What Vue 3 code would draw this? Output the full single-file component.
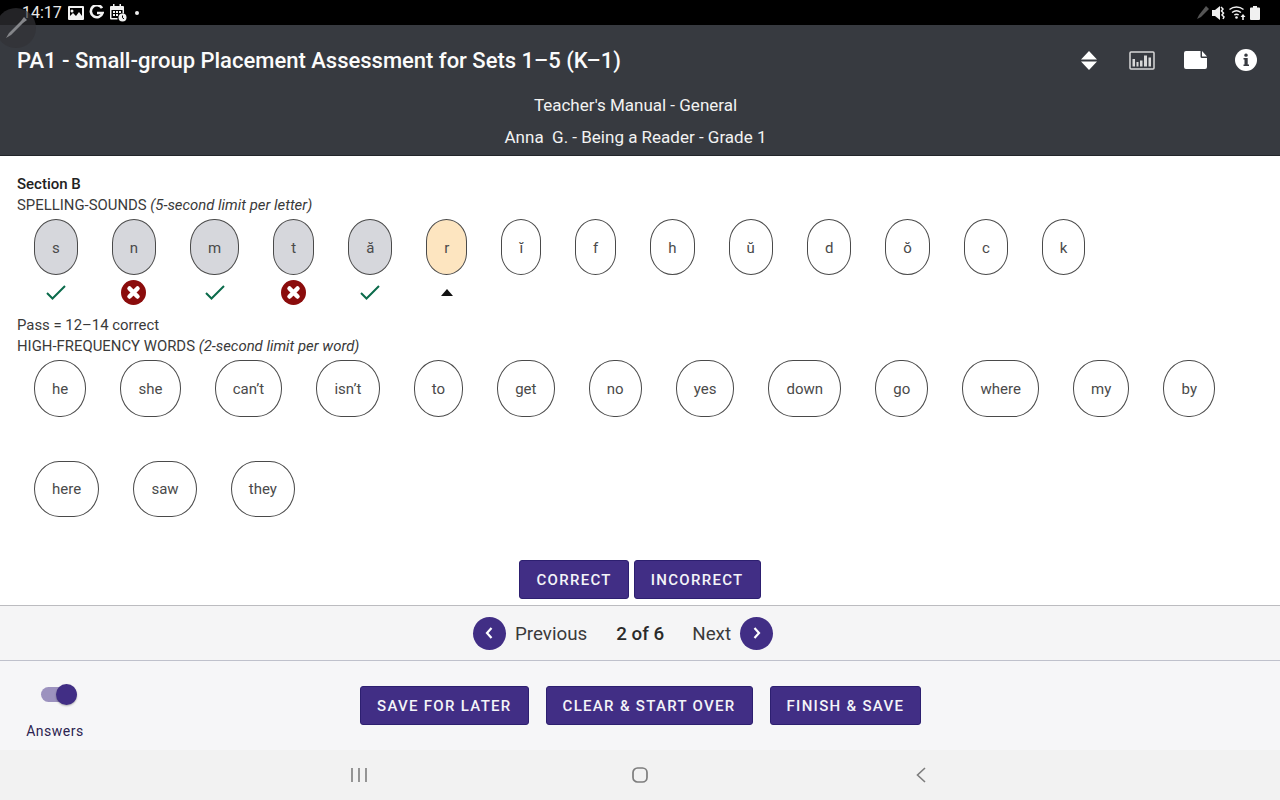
<script setup>
const letters = [
  { t: 's', state: 'done', mark: 'ok' },
  { t: 'n', state: 'done', mark: 'bad' },
  { t: 'm', state: 'done', mark: 'ok' },
  { t: 't', state: 'done', mark: 'bad' },
  { t: 'ă', state: 'done', mark: 'ok' },
  { t: 'r', state: 'current', mark: 'cur' },
  { t: 'ĭ' }, { t: 'f' }, { t: 'h' }, { t: 'ŭ' }, { t: 'd' }, { t: 'ŏ' }, { t: 'c' }, { t: 'k' }
]
const words = ['he', 'she', 'can’t', 'isn’t', 'to', 'get', 'no', 'yes', 'down', 'go', 'where', 'my', 'by', 'here', 'saw', 'they']
</script>

<template>
  <div class="page">
    <div class="status">
      <div class="status-left">
        <span class="time">14:17</span>
        <svg width="16" height="14" viewBox="0 0 16 14"><path fill="#f2f2f2" fill-rule="evenodd" d="M1 0h14a1 1 0 0 1 1 1v12a1 1 0 0 1-1 1H1a1 1 0 0 1-1-1V1a1 1 0 0 1 1-1zm1 2v8l3-3 3 3 3-4 3 4V2zm2 1.5a1.500 1.500 0 1 1 0 3 1.500 1.500 0 0 1 0-3z"/></svg>
        <svg width="15" height="15" viewBox="0 0 15 15"><path fill="none" stroke="#f2f2f2" stroke-width="2.600" d="M13 3.200A6 6 0 1 0 13.600 8H8"/></svg>
        <svg width="18" height="18" viewBox="0 0 18 18"><path fill="#f0f0f0" fill-rule="evenodd" d="M2 2h2V0h1.500v2h5V0H12v2h2a1 1 0 0 1 1 1v6.500h-1.500V6h-11v8h6v1.500H2a1 1 0 0 1-1-1V3a1 1 0 0 1 1-1z"/><path fill="#f0f0f0" d="M4 7h2v2H4zM7 7h2v2H7zM10 7h2v2h-2zM4 10h2v2H4zM7 10h2v2H7z"/><circle cx="13.500" cy="13.500" r="4" fill="#f0f0f0"/><path fill="none" stroke="#000" d="M13.500 11.500v2.300l1.500 1"/></svg>
        <span class="dot"></span>
      </div>
      <div class="status-right">
        <svg width="13" height="13" viewBox="0 0 13 13"><path fill="#555" d="M10 0l3 3-8 8-4 2 2-4z"/></svg>
        <svg width="14" height="14" viewBox="0 0 14 14"><path fill="#f0f0f0" d="M0 4h3l5-4v14l-5-4H0z"/><path fill="none" stroke="#f0f0f0" stroke-width="1.500" d="M9 1l2 2-1.500 2 2 2-1.500 2 2 2-1 2"/></svg>
        <svg width="18" height="15" viewBox="0 0 18 15"><g fill="none" stroke="#f0f0f0" stroke-width="1.400"><path d="M0.500 4.500a11 11 0 0 1 14 0"/><path d="M3 7.500a7.500 7.500 0 0 1 9 0"/><path d="M5.300 10a4 4 0 0 1 4.400 0"/></g><circle cx="7.500" cy="12.500" r="1.300" fill="#f0f0f0"/><path fill="#f0f0f0" d="M14 9l2.500 3h-1.700v3h-1.600v-3h-1.700z"/></svg>
        <svg width="10" height="14" viewBox="0 0 10 14"><path fill="#f0f0f0" d="M3 0h4v1.500h2a1 1 0 0 1 1 1V13a1 1 0 0 1-1 1H1a1 1 0 0 1-1-1V2.500a1 1 0 0 1 1-1h2z"/></svg>
      </div>
    </div>
    <div class="pencil">
      <svg width="24" height="24" viewBox="0 0 24 24"><path fill="#85868a" d="M20 1l3 3-4 3-12 12-5 3 3-5L17 5z"/></svg>
    </div>

    <header class="header">
      <div class="header-top">
        <h1 class="title">PA1 - Small-group Placement Assessment for Sets 1–5 (K–1)</h1>
        <div class="tools">
          <svg class="t-sort" width="16" height="19" viewBox="0 0 16 19"><path fill="#fff" d="M8 0l8 8.500H0zM0 10.500h16L8 19z"/></svg>
          <svg class="t-chart" width="26" height="19" viewBox="0 0 26 19"><rect x="1" y="1" width="24" height="17" rx="1" fill="none" stroke="#d8d8d8" stroke-width="1.500"/><path fill="#d8d8d8" d="M3.500 8h2.500v7.500H3.500zM7.500 11h2v4.500h-2zM11 9.500h2.500v6H11zM15 4.500h3v11h-3zM19.500 6.500H22v9h-2.500z"/></svg>
          <svg class="t-note" width="23" height="18" viewBox="0 0 23 18"><path fill="#fff" d="M2 0h14.500v5.500a1.500 1.500 0 0 0 1.500 1.500h5v9a2 2 0 0 1-2 2H2a2 2 0 0 1-2-2V2a2 2 0 0 1 2-2zM18 0l5 5.500h-5z"/></svg>
          <svg class="t-info" width="22" height="22" viewBox="0 0 22 22"><circle cx="11" cy="11" r="11" fill="#fff"/><rect x="9.300" y="4.500" width="3.400" height="3.200" rx="1.500" fill="#373a40"/><path fill="#373a40" d="M8.500 9h4.200v6.500H14V17H8.500v-1.500h1V10.500h-1z"/></svg>
        </div>
      </div>
      <p class="sub sub-a">Teacher's Manual - General</p>
      <p class="sub sub-b">Anna&nbsp; G. - Being a Reader - Grade 1</p>
    </header>

    <main class="main">
      <div class="section-name">Section B</div>
      <div class="label">SPELLING-SOUNDS <em>(5-second limit per letter)</em></div>
      <div class="letters">
        <div v-for="l in letters" :key="l.t" class="letter">
          <div class="pill" :class="l.state">{{ l.t }}</div>
          <div class="mark">
            <svg v-if="l.mark === 'ok'" width="20" height="15" viewBox="0 0 20 15"><path fill="none" stroke="#0b6b4b" stroke-width="2" d="M1 8l5.500 5.500L19 1"/></svg>
            <svg v-else-if="l.mark === 'bad'" width="25" height="25" viewBox="0 0 25 25"><circle cx="12.500" cy="12.500" r="12.500" fill="#8b0c0c"/><path stroke="#fff" stroke-width="4.500" stroke-linecap="round" d="M8.500 8.500l8 8M16.500 8.500l-8 8"/></svg>
            <svg v-else-if="l.mark === 'cur'" width="12" height="7" viewBox="0 0 12 7"><path d="M6 0l6 7H0z" fill="#111"/></svg>
          </div>
        </div>
      </div>
      <div class="label pass">Pass = 12–14 correct</div>
      <div class="label">HIGH-FREQUENCY WORDS <em>(2-second limit per word)</em></div>
      <div class="words">
        <div v-for="w in words" :key="w" class="pill word">{{ w }}</div>
      </div>
      <div class="answer-row">
        <button class="btn">CORRECT</button>
        <button class="btn">INCORRECT</button>
      </div>
    </main>

    <nav class="pager">
      <span class="round"><svg width="10" height="14" viewBox="0 0 10 14"><path fill="none" stroke="#fff" stroke-width="2.200" d="M7.500 2L3 7l4.500 5"/></svg></span>
      <span class="pager-text prev">Previous</span>
      <b class="count">2 of 6</b>
      <span class="pager-text next">Next</span>
      <span class="round"><svg width="10" height="14" viewBox="0 0 10 14"><path fill="none" stroke="#fff" stroke-width="2.200" d="M2.500 2L7 7l-4.500 5"/></svg></span>
    </nav>

    <footer class="footer">
      <div class="toggle-wrap">
        <div class="toggle"><span class="knob"></span></div>
        <span class="toggle-label">Answers</span>
      </div>
      <div class="actions">
        <button class="btn">SAVE FOR LATER</button>
        <button class="btn">CLEAR &amp; START OVER</button>
        <button class="btn">FINISH &amp; SAVE</button>
      </div>
    </footer>

    <div class="sysnav">
      <svg width="18" height="16" viewBox="0 0 18 16"><path stroke="#7d7d7d" stroke-width="1.600" d="M2 1v14M9 1v14M16 1v14"/></svg>
      <svg width="18" height="16" viewBox="0 0 18 16"><rect x="2" y="1" width="14" height="14" rx="4.500" fill="none" stroke="#7d7d7d" stroke-width="1.700"/></svg>
      <svg width="18" height="16" viewBox="0 0 18 16"><path fill="none" stroke="#7d7d7d" stroke-width="1.600" d="M13 1L5.500 8l7.500 7"/></svg>
    </div>
  </div>
</template>

<style>
html, body { margin: 0; background: #fff; }
</style>

<style scoped>
.page {
  position: relative;
  width: 1280px;
  height: 800px;
  overflow: hidden;
  display: flex;
  flex-direction: column;
  font-family: Roboto, "Liberation Sans", sans-serif;
  color: #333;
}
.status {
  height: 25px;
  background: #000;
  display: flex;
  justify-content: space-between;
  align-items: center;
  padding: 0 20px 0 22px;
  box-sizing: border-box;
  flex: none;
}
.status-left, .status-right { display: flex; align-items: center; }
.status-left { gap: 5px; }
.status-right { gap: 3px; }
.time { color: #e8e8e8; font-size: 16px; margin-right: 1px; }
.dot { width: 4px; height: 4px; border-radius: 50%; background: #eee; margin-left: 3px; }
.pencil {
  position: absolute;
  left: -4px;
  top: 8px;
  width: 40px;
  height: 40px;
  border-radius: 50%;
  background: rgba(50, 50, 54, 0.7);
  display: flex;
  align-items: center;
  justify-content: center;
}
.header {
  flex: none;
  height: 131px;
  box-sizing: border-box;
  background: #373a40;
  color: #fff;
  border-bottom: 1px solid #22252a;
}
.header-top {
  height: 70px;
  padding-left: 17px;
  display: flex;
  justify-content: space-between;
  align-items: center;
}
.title { margin: 0; font-size: 22px; font-weight: 500; color: #fbfbfb; }
.tools { display: flex; align-items: center; padding-right: 23px; }
.t-sort { margin-right: 32px; }
.t-chart { margin-right: 29px; }
.t-note { margin-right: 28px; }
.sub { margin: 0; text-align: center; font-size: 17px; line-height: 20px; color: #f2f2f2; padding-right: 9px; }
.sub-a { margin-bottom: 12px; }
.main {
  flex: none;
  height: 449px;
  box-sizing: border-box;
  background: #fff;
  padding: 18px 0 0 17px;
  display: flex;
  flex-direction: column;
}
.section-name { font-size: 15px; line-height: 21px; font-weight: 500; color: #222; }
.label { font-size: 14.9px; line-height: 21px; color: #3a3a3a; }
.label em { font-style: italic; }
.letters {
  display: flex;
  gap: 34px;
  padding-left: 17px;
  margin-top: 3px;
}
.letter { display: flex; flex-direction: column; align-items: center; }
.pill {
  height: 56px;
  box-sizing: border-box;
  padding: 1px 17px 0;
  border: 1px solid #4a4a4a;
  border-radius: 24px / 26px;
  display: flex;
  align-items: center;
  justify-content: center;
  font-size: 15px;
  color: #4a4a4a;
  background: #fff;
}
.pill.done { background: #d6d7dc; }
.pill.current { background: #fde5c0; }
.mark {
  height: 25px;
  margin-top: 5px;
  display: flex;
  align-items: center;
  justify-content: center;
}
.pass { margin-top: 10px; }
.words {
  display: flex;
  flex-wrap: wrap;
  gap: 44px 34px;
  padding-left: 17px;
  margin-top: 3px;
  width: 1200px;
}
.pill.word { border-radius: 25px / 28px; padding: 1px 17.1px 0; height: 56.5px; }
.answer-row {
  display: flex;
  justify-content: center;
  gap: 5px;
  margin: 43px 0 0 -17px;
}
.btn {
  height: 39px;
  box-sizing: border-box;
  padding: 0 16px;
  background: #412e85;
  border: 1px solid #2d1f70;
  border-radius: 3px;
  color: #f4f4f8;
  font-family: Roboto, "Liberation Sans", sans-serif;
  font-size: 15px;
  font-weight: 500;
  letter-spacing: 1.3px;
}
.pager {
  flex: none;
  height: 56px;
  box-sizing: border-box;
  background: #f5f5f6;
  border-top: 1px solid #bcbcc0;
  border-bottom: 1px solid #bfc1cc;
  display: flex;
  align-items: center;
  justify-content: center;
  padding-right: 34px;
  font-size: 18.8px;
  color: #333;
}
.round {
  width: 33px;
  height: 33px;
  border-radius: 50%;
  background: #412e85;
  display: flex;
  align-items: center;
  justify-content: center;
}
.prev { margin: 0 29px 0 9px; }
.next { margin: 0 9px 0 28px; }
.pager-text { font-size: 18.8px; color: #3a3a3a; padding-top: 2px; }
.count { font-weight: 500; color: #2a2a2a; padding-top: 2px; }
.footer {
  flex: none;
  height: 89px;
  background: #f6f6f8;
  position: relative;
  display: flex;
  align-items: flex-start;
}
.toggle-wrap {
  width: 110px;
  display: flex;
  flex-direction: column;
  align-items: center;
  padding-top: 26px;
}
.toggle {
  width: 36px;
  height: 15px;
  border-radius: 8px;
  background: #9c92bf;
  position: relative;
  margin-left: 7px;
}
.knob {
  position: absolute;
  right: 0;
  top: -3px;
  width: 21px;
  height: 21px;
  border-radius: 50%;
  background: #412e85;
  box-shadow: 0 1px 2px rgba(0, 0, 0, 0.3);
}
.toggle-label { margin-top: 21px; font-size: 14px; letter-spacing: 0.5px; color: #2c2350; }
.actions {
  display: flex;
  gap: 17px;
  margin: 25px 0 0 250px;
}
.sysnav {
  flex: none;
  height: 50px;
  background: #f2f2f2;
  display: flex;
  align-items: center;
  padding-left: 350px;
  gap: 263px;
}
</style>
